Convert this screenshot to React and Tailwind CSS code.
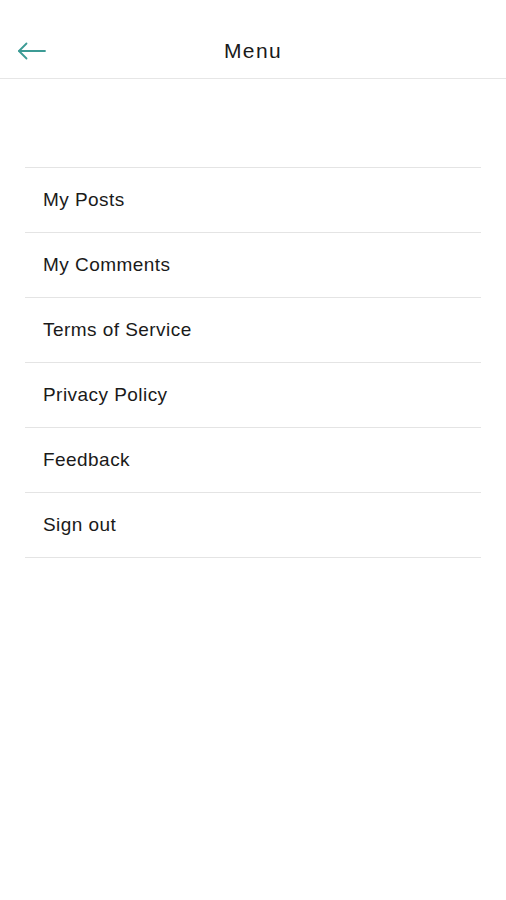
export default function App() {
  const items = ["My Posts", "My Comments", "Terms of Service", "Privacy Policy", "Feedback", "Sign out"];
  return (
    <div className="w-[506px] h-[900px] bg-white" style={{ fontFamily: '"Liberation Sans", Arial, sans-serif' }}>
      <div className="relative h-[79px] border-b border-[#e6e6e6] flex items-center justify-center">
        <svg className="absolute left-[17px] top-[40px]" width="30" height="22" viewBox="0 0 30 22" fill="none" stroke="#3c9b95" strokeWidth="1.8" strokeLinecap="round" strokeLinejoin="round">
          <path d="M28 11H2" />
          <path d="M9.5 3.5L2 11L9.5 18.5" />
        </svg>
        <span className="mt-[23px] text-[21px] text-[#1a1a1a] tracking-[1.4px]">Menu</span>
      </div>
      <div className="mt-[88px] mx-[25px] border-b-[1.5px] border-[#e4e4e4]">
        {items.map((t) => (
          <div key={t} className="h-[65px] border-t-[1.5px] border-[#e4e4e4] flex items-center pl-[18px] text-[19px] text-[#1a1a1a] tracking-[0.45px]">
            {t}
          </div>
        ))}
      </div>
    </div>
  );
}
